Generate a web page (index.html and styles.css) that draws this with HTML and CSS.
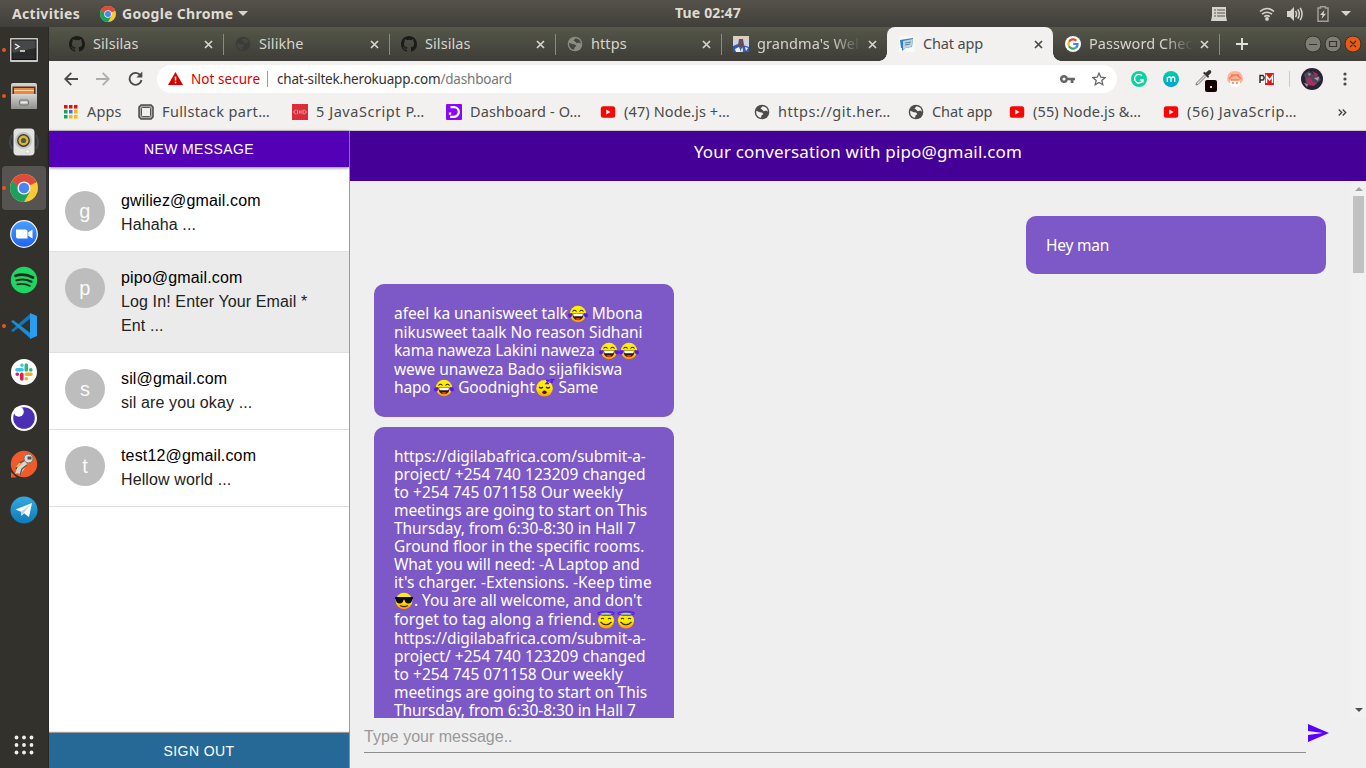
FILE: index.html
```html
<!DOCTYPE html>
<html lang="en">
<head>
<meta charset="utf-8">
<title>Chat app</title>
<link rel="stylesheet" href="styles.css">
</head>
<body>
<svg class="defs" width="0" height="0" aria-hidden="true">
  <defs>
    <linearGradient id="face" x1="0" y1="0" x2="0" y2="1"><stop offset="0" stop-color="#fff200"/><stop offset=".55" stop-color="#ffe800"/><stop offset="1" stop-color="#ff9800"/></linearGradient>
    <linearGradient id="metal" x1="0" y1="0" x2="0" y2="1"><stop offset="0" stop-color="#d4d4d2"/><stop offset="1" stop-color="#8f8f8c"/></linearGradient>
    <linearGradient id="zoomBlue" x1="0" y1="0" x2="0" y2="1"><stop offset="0" stop-color="#4aa0ff"/><stop offset="1" stop-color="#1f62f0"/></linearGradient>
    <linearGradient id="tgBlue" x1="0" y1="0" x2="0" y2="1"><stop offset="0" stop-color="#34aadf"/><stop offset="1" stop-color="#0e7bb8"/></linearGradient>
    <linearGradient id="teal" x1="0" y1="0" x2="0" y2="1"><stop offset="0" stop-color="#00d3a0"/><stop offset="1" stop-color="#009fdc"/></linearGradient>
  </defs>
  <symbol id="joy" viewBox="0 0 20 18"><circle cx="10" cy="9" r="8.2" fill="url(#face)"/><path d="M4.5 6.5q2-2.5 4 0M11.5 6.5q2-2.5 4 0" fill="none" stroke="#332a00" stroke-width="1.1"/><path d="M4.3 8.6h11.4q0 6.6-5.7 6.6T4.300 8.600z" fill="#2a1500"/><path d="M5 8.700h10l-.6 2.600H5.600z" fill="#fff"/><path d="M7 14q3-2 6 0-3 2-6 0z" fill="#f43a2a"/><path d="M.6 8.500 4.300 8l-.5 3.600q-1.600 1.800-3 .4t-.2-3.500zM19.400 8.500 15.700 8l.5 3.600q1.600 1.800 3 .4t.2-3.500z" fill="#5b16f5"/></symbol>
  <symbol id="sleep" viewBox="0 0 20 18"><circle cx="9.500" cy="9.300" r="8.300" fill="url(#face)"/><path d="M4 8q2 2 4 0M11 8q2 2 4 0" fill="none" stroke="#332a00" stroke-width="1.200"/><ellipse cx="9.500" cy="13.300" rx="2.200" ry="1.800" fill="#3a1700"/><path d="M11 1.500h3l-3 3h3M15.500.600h3l-3 2.600h2.500" fill="none" stroke="#5b16f5" stroke-width="1.300"/></symbol>
  <symbol id="cool" viewBox="0 0 20 18"><circle cx="10" cy="9" r="8.300" fill="url(#face)"/><path d="M1 5h18v1.500l-.800.500q-.200 4.500-4 4.500-3.200 0-3.700-3.800h-1Q9 11.500 5.800 11.500q-3.800 0-4-4.500L1 6.500z" fill="#0c0c0c"/><path d="M6 13.500q4 2.200 8 0" fill="none" stroke="#4a2a00" stroke-width="1.100"/></symbol>
  <symbol id="halo" viewBox="0 0 20 18"><circle cx="10" cy="9.600" r="8" fill="url(#face)"/><ellipse cx="10" cy="2.400" rx="8" ry="1.700" fill="none" stroke="#5b16f5" stroke-width="1.400"/><path d="M5 3h10" stroke="#66ddb0" stroke-width="1.100"/><path d="M5 8q1.500-1.500 3 0M12 8q1.500-1.500 3 0M4.500 11q5.500 5.500 11 0" fill="none" stroke="#332a00" stroke-width="1.100"/></symbol>
  <symbol id="chrome" viewBox="0 0 28 28"><circle cx="14" cy="14" r="14" fill="#fbc934"/><path d="M14 14 1.880 7A14 14 0 0 1 26.120 7z" fill="#dd4b3e"/><path d="M14 7h12.120L26.500 8.200 14 14z" fill="#dd4b3e"/><path d="M14 14 1.880 7A14 14 0 0 0 14 28l6-10.500z" fill="#1ba15f"/><path d="M2.800 5.700 8 14.500 14 7.600z" fill="#dd4b3e"/><circle cx="14" cy="14" r="6.600" fill="#f3f3f3"/><circle cx="14" cy="14" r="5.200" fill="#4a86f7"/></symbol>
  <symbol id="github" viewBox="0 0 16 16"><path fill="#1b1b1a" d="M8 0C3.580 0 0 3.580 0 8c0 3.540 2.290 6.530 5.470 7.590.4.070.55-.17.55-.38v-1.490c-2.010.37-2.530-.49-2.690-.94-.09-.23-.48-.94-.82-1.130-.28-.15-.68-.52-.01-.53.63-.01 1.080.58 1.230.82.72 1.210 1.870.87 2.330.66.070-.52.280-.87.510-1.070-1.780-.2-3.640-.89-3.640-3.950 0-.87.310-1.590.82-2.150-.08-.2-.36-1.020.08-2.120 0 0 .67-.21 2.200.82a7.500 7.500 0 0 1 4 0c1.530-1.040 2.200-.82 2.200-.82.44 1.100.16 1.920.08 2.120.51.56.82 1.270.82 2.150 0 3.070-1.870 3.750-3.650 3.950.29.25.54.73.54 1.480v2.200c0 .21.150.46.55.38A8 8 0 0 0 16 8c0-4.420-3.580-8-8-8z"/></symbol>
  <symbol id="globe" viewBox="0 0 16 16"><circle cx="8" cy="8" r="7.300" fill="currentColor"/><path fill="var(--land)" d="M2.300 6.800 5.800 8.200l2.200.3 1.400 1.500-1.900 1.400-.4 2.400Q2.600 13 2.200 8.800zM8.700 2.200 6.500 4.400l1.500 1.200 1.800 1.600 2.400-.6 1.600 1.200Q13.800 3 8.700 2.200z"/></symbol>
  <symbol id="close" viewBox="0 0 9 9"><path d="M1 1l7 7M8 1 1 8" stroke="currentColor" stroke-width="1.700"/></symbol>
  <symbol id="youtube" viewBox="0 0 16 16"><rect x=".8" y="2.200" width="14.400" height="11.600" rx="2.500" fill="#f80606"/><path d="M6.300 5.600v4.800L10.500 8z" fill="#fff"/></symbol>
</svg>

<header class="topbar">
  <span class="t-act">Activities</span>
  <svg width="16" height="16"><use href="#chrome"/></svg>
  <span class="t-name">Google Chrome</span>
  <i class="caret"></i>
  <span class="clock">Tue 02:47</span>
  <div class="status">
    <svg width="16" height="14" viewBox="0 0 16 14"><path d="M1 0h14v9l1 5H0l1-5z" fill="#d6d4cf"/><path d="M3 3h2M6 3h8M3 6h2M6 6h8M3 9h2M6 9h8" stroke="#55534c" stroke-width="1.200"/></svg>
    <svg class="wifi" width="16" height="14" viewBox="0 0 16 14"><path d="M1 4.500Q8-1.500 15 4.500M3 7.200q5-4 10 0M5.200 9.600q2.800-2 5.600 0" fill="none" stroke="#d6d4cf" stroke-width="1.600"/><circle cx="8" cy="11.900" r="1.900" fill="#d6d4cf"/></svg>
    <svg class="vol" width="16" height="14" viewBox="0 0 16 14"><path d="M0 4h3l4-4v14L3 10H0z" fill="#d6d4cf"/><path d="M8.500 4q2 3 0 6M10.800 2.300q3 4.700 0 9.400M13.200.8q3.800 6.200 0 12.400" fill="none" stroke="#d6d4cf" stroke-width="1.500"/></svg>
    <svg class="bat" width="12" height="16" viewBox="0 0 12 16"><path d="M3.500 2V.7h5V2H11v13.300H1V2z" fill="none" stroke="#a19f99" stroke-width="1.500"/><path d="M7.500 4 3 9h2.600L4.500 13 9 7.800H6.500z" fill="#d6d4cf"/></svg>
    <i class="caret"></i>
  </div>
</header>

<div class="desktop">
<nav class="dock">
  <div class="app run"><svg width="28" height="24" viewBox="0 0 28 24"><rect width="28" height="24" rx="1" fill="#c9c9c7"/><rect x="2" y="2" width="24" height="19.500" fill="#292b2a" stroke="#111"/><path d="M2.500 2.500h23V10l-23 5z" fill="#464847"/><path d="m5 6 4 2.500L5 11M10 13h5" fill="none" stroke="#eee" stroke-width="1.400"/></svg></div>
  <div class="app run"><svg width="28" height="28" viewBox="0 0 28 28"><rect x="1" y="1" width="26" height="26" rx="2" fill="url(#metal)"/><rect x="2.500" y="4.500" width="23" height="9" fill="#593016"/><path d="M4 6h20v2H4zM4 9h20v4H4z" fill="#ef8740"/><path d="M4 8h20v1H4z" fill="#ffd9a8"/><rect x="1" y="12" width="26" height="15" rx="1" fill="url(#metal)"/><rect x="9.500" y="18" width="9" height="5" rx="1.200" fill="#bbb" stroke="#6d6d6a"/><path d="M11 20.500h6" stroke="#eee" stroke-width="1.500"/></svg></div>
  <div class="app"><svg width="30" height="28" viewBox="0 0 30 28"><path d="M3 7q-4 7 0 14M27 7q4 7 0 14" fill="none" stroke="#3d474f" stroke-width="2"/><rect x="4.500" y=".5" width="21" height="27" rx="4" fill="#e2e2df"/><circle cx="14.500" cy="12.500" r="8.500" fill="#c2c3c1"/><circle cx="14.500" cy="12.500" r="6.400" fill="#3b3b38"/><circle cx="14.500" cy="12.500" r="5" fill="#d8b92a"/><circle cx="14.500" cy="12.500" r="2.600" fill="#55564c"/><circle cx="18.500" cy="23.500" r="1.800" fill="#fff" stroke="#bbb" stroke-width=".6"/></svg></div>
  <div class="app run active"><svg width="28" height="28"><use href="#chrome"/></svg></div>
  <div class="app"><svg width="28" height="28" viewBox="0 0 28 28"><circle cx="14" cy="14" r="13.300" fill="url(#zoomBlue)" stroke="#f4f7fb" stroke-width="1.200"/><path d="M6 9.500h9.500q2 0 2 2V18.500H8q-2 0-2-2zM18.300 12.300 22.500 9.500v9l-4.200-2.800z" fill="#fff"/></svg></div>
  <div class="app"><svg width="28" height="28" viewBox="0 0 28 28"><circle cx="14" cy="14" r="13.200" fill="#1ed760"/><path d="M5.500 9.800q9-2.800 17.500 1.700" fill="none" stroke="#1f2b22" stroke-width="2.700" stroke-linecap="round"/><path d="M6.500 14.300q8-2.200 15 1.500" fill="none" stroke="#1f2b22" stroke-width="2.200" stroke-linecap="round"/><path d="M7.300 18.400q6.700-1.600 12.500 1.500" fill="none" stroke="#1f2b22" stroke-width="1.800" stroke-linecap="round"/></svg></div>
  <div class="app run"><svg width="28" height="28" viewBox="0 0 28 28"><path d="m1 18.500 2 1.500L21 6V1z" fill="#1478be"/><path d="m1 9.500 2-1.500 18 13.500V27z" fill="#1c8cd8"/><path d="m20 1 7 3v20l-7 3z" fill="#2a9df0"/></svg></div>
  <div class="app"><svg width="28" height="28" viewBox="0 0 28 28"><circle cx="14" cy="14" r="13" fill="#fff"/><g stroke-width="3.600" stroke-linecap="round"><path d="M7 11.700h5M12 7.200v.1" stroke="#36c5f0"/><path d="M16.300 7v5M20.800 12v-.1" stroke="#2eb67d"/><path d="M16.300 16.300h4.700M16.300 20.800h.1" stroke="#ecb22e"/><path d="M11.800 16.300v4.700M7.200 16.300h.1" stroke="#e01e5a"/></g></svg></div>
  <div class="app"><svg width="28" height="28" viewBox="0 0 28 28"><circle cx="14" cy="14" r="13" fill="#fff"/><circle cx="14" cy="14" r="10.800" fill="#4a2fb5"/><circle cx="8.800" cy="7.800" r="5" fill="#fff"/></svg></div>
  <div class="app"><svg width="28" height="28" viewBox="0 0 28 28"><circle cx="14" cy="14" r="13.200" fill="#f15a29"/><path d="M1 22v5.500h5.500z" fill="#f15a29"/><path d="M16 9 7 18l-2 6 3-1 2 2 7-10z" fill="#d9d5d0"/><path d="m16 10-7 3-3 6M17 15l-5 4-2 6" fill="none" stroke="#65513f" stroke-width="1.300"/><circle cx="18.500" cy="8.500" r="4.500" fill="#dedbd7" stroke="#756f69"/><path d="M17.500 6.500h4v3h-4z" fill="#55504b"/><path d="m7 17 3-4" stroke="#ffb14b" stroke-width="2"/></svg></div>
  <div class="app"><svg width="28" height="28" viewBox="0 0 28 28"><circle cx="14" cy="14" r="13.500" fill="url(#tgBlue)"/><path d="M5.500 13.500 22 7l-3 14-5-3.700-2.500 2.500-.5-4z" fill="#fff"/><path d="m11 15.800 9-7-6.500 8.500-2 2.500z" fill="#b9d4e7"/></svg></div>
  <svg class="grid" width="20" height="20" viewBox="0 0 20 20" fill="#eee"><circle cx="2.500" cy="2.500" r="1.900"/><circle cx="10" cy="2.500" r="1.900"/><circle cx="17.500" cy="2.500" r="1.900"/><circle cx="2.500" cy="10" r="1.900"/><circle cx="10" cy="10" r="1.900"/><circle cx="17.500" cy="10" r="1.900"/><circle cx="2.500" cy="17.500" r="1.900"/><circle cx="10" cy="17.500" r="1.900"/><circle cx="17.500" cy="17.500" r="1.900"/></svg>
</nav>

<main class="window">
  <div class="tabs">
    <div class="tab"><svg class="fav"><use href="#github"/></svg><span class="title">Silsilas</span><svg class="x"><use href="#close"/></svg></div>
    <div class="tab"><svg class="fav dim"><use href="#globe"/></svg><span class="title">Silikhe</span><svg class="x"><use href="#close"/></svg></div>
    <div class="tab"><svg class="fav"><use href="#github"/></svg><span class="title">Silsilas</span><svg class="x"><use href="#close"/></svg></div>
    <div class="tab"><svg class="fav gray"><use href="#globe"/></svg><span class="title">https</span><svg class="x"><use href="#close"/></svg></div>
    <div class="tab before"><svg class="fav" viewBox="0 0 16 16"><rect width="16" height="16" fill="#cfd3df"/><path d="M0 0h16v4H0z" fill="#d9cfbc"/><path d="M0 10 5 8l3 4v4H0zM10 9l6 2v5h-6z" fill="#315cb5"/><path d="M6 3h4l1 6-2 4-4-4z" fill="#674b5f"/><path d="m2 13 4-2 2 5H3zM12 11l3 1-2 3z" fill="#eef3ff"/></svg><span class="title fade">grandma's Wel</span><svg class="x"><use href="#close"/></svg></div>
    <div class="tab current"><svg class="fav" viewBox="0 0 16 16"><rect width="16" height="16" fill="#f8f8f6"/><path d="m1 4 13-2-1 9-7 1-3 3v-3H2z" fill="#2f80c7"/><path d="m4 5 10-2-1.500 8L6 12l-2 1z" fill="#bcd3e2"/><path d="m6 7 6-1M6 9l5-1" stroke="#638299"/></svg><span class="title">Chat app</span><svg class="x"><use href="#close"/></svg></div>
    <div class="tab"><svg class="fav" viewBox="0 0 16 16"><circle cx="8" cy="8" r="8" fill="#fff"/><g fill="none" stroke-width="2.200"><path d="M4 5.700A4.600 4.600 0 0 1 11.300 4.700" stroke="#ea4335"/><path d="M4 10.300a4.600 4.600 0 0 1 0-4.600" stroke="#fbbc05"/><path d="M11 11.500a4.600 4.600 0 0 1-7-1.200" stroke="#34a853"/><path d="M8.200 8h4.400q0 2.300-1.600 3.500" stroke="#4285f4"/></g></svg><span class="title fade">Password Chec</span><svg class="x"><use href="#close"/></svg></div>
    <svg class="plus" width="12" height="12" viewBox="0 0 12 12"><path d="M6 0v12M0 6h12" stroke="#e4e2dc" stroke-width="1.900"/></svg>
    <svg class="winbtns" width="58" height="18" viewBox="0 0 58 18"><g fill="#7e7d76" stroke="#34332e"><circle cx="9" cy="9" r="8"/><circle cx="29" cy="9" r="8"/><circle cx="49" cy="9" r="8" fill="#ee5a12"/></g><path d="M5 9.500h8M25.500 6.500h7v5h-7zM46 6l6 6M52 6l-6 6" fill="none" stroke="#34332e" stroke-width="1.200"/></svg>
  </div>

  <div class="toolbar">
    <svg width="14" height="14" viewBox="0 0 14 14"><path d="M14 7H1.500M7.300.8 1.200 7l6.100 6.200" fill="none" stroke="#4a4a4a" stroke-width="1.800"/></svg>
    <svg class="fwd" width="14" height="14" viewBox="0 0 14 14"><path d="M0 7h12.500M6.700.8 12.800 7l-6.100 6.200" fill="none" stroke="#adadad" stroke-width="1.800"/></svg>
    <svg class="reload" width="15" height="15" viewBox="0 0 15 15"><path d="M12.600 4.500A6 6 0 1 0 13.500 9" fill="none" stroke="#4a4a4a" stroke-width="1.900"/><path d="M14.300.5v6h-6z" fill="#4a4a4a"/></svg>
    <div class="omni">
      <svg width="15" height="13" viewBox="0 0 15 13"><path d="M7.500 0 15 13H0z" fill="#d90000"/><path d="M7.500 4.500v4M7.500 9.700v1.600" stroke="#fff" stroke-width="1.500"/></svg>
      <span class="ns">Not secure</span>
      <i class="bar"></i>
      <span class="url">chat-siltek.herokuapp.com<span class="path">/dashboard</span></span>
      <svg class="key" width="15" height="8" viewBox="0 0 15 8"><path fill="#666" fill-rule="evenodd" d="M4 0a4 4 0 0 1 3.800 2.800H15v2.400h-1.500V8h-2.800V5.200H7.800A4 4 0 1 1 4 0zm0 2.500a1.500 1.500 0 1 0 0 3 1.500 1.500 0 0 0 0-3z"/></svg>
      <svg class="star" width="14" height="14" viewBox="0 0 14 14"><path d="m7 1.200 1.800 4 4.300.4-3.300 2.900 1 4.200L7 10.500l-3.800 2.200 1-4.200L.9 5.600l4.300-.4z" fill="none" stroke="#666" stroke-width="1.300"/></svg>
    </div>
    <div class="exts">
      <svg width="16" height="16" viewBox="0 0 16 16"><circle cx="8" cy="8" r="8" fill="#0fd0a0"/><path d="M11 4.700A4.300 4.300 0 1 0 12 9H9.200M12 9v2.500" fill="none" stroke="#fff" stroke-width="1.400"/></svg>
      <svg width="16" height="16" viewBox="0 0 16 16"><circle cx="8" cy="8" r="8" fill="url(#teal)"/><path d="M4.300 11V6M4.300 7q3-2 3.700 0v4M8 7q3.300-2 3.700 0v4" fill="none" stroke="#fff" stroke-width="1.300"/></svg>
      <svg class="drop" width="22" height="23" viewBox="0 0 22 23"><path d="m9.500 6-8 8-.5 2 2-.5 8-8" fill="#ddd" stroke="#777"/><path d="m8 4 5 5 1.200-1.200-1-1L16 4q1-3-2-3l-3.300 2.800-1.200-1z" fill="#333"/><rect x="10" y="11" width="12" height="12" rx="2" fill="#170000"/><rect x="15" y="17" width="2" height="2" fill="#ddd"/></svg>
      <svg width="16" height="16" viewBox="0 0 16 16"><path d="M0 9q0-9 8-9t8 9l-2 3H2z" fill="#ffb49c"/><path d="M2 8q6-8 12 0M4 4l8 0" fill="none" stroke="#ff7850" stroke-width="1.500"/><path d="M3 9h10v4l-2 3H5l-2-3z" fill="#fff"/><path d="M3.500 9h9M5 12h2M9 12h2" stroke="#ff7850" stroke-width="1.500"/></svg>
      <svg width="16" height="12" viewBox="0 0 16 12"><rect x="6" width="9" height="12" fill="#e61414"/><path d="M1 10V2.500h3q2.300 2.300 0 4.500H1" fill="none" stroke="#3a2a2a" stroke-width="1.500"/><path d="M7.500 10V3l3 4 3-4v7" fill="none" stroke="#fff" stroke-width="1.500"/></svg>
      <i class="bar"></i>
      <svg class="me" width="22" height="22" viewBox="0 0 22 22"><circle cx="11" cy="11" r="11" fill="#282431"/><path d="m3 6 5-3 4 3 6 2 2 4-5 4-5-3-5 2z" fill="#51455a"/><path d="m5 11 4-2 3 5 4 1-3 3-6-1zM11 3l6 3-2 3z" fill="#a53062"/><path d="m3 15 4 1-1 3zM13 10l5-1-1 4zM7 5l3 1-2 2z" fill="#ad9ca8"/></svg>
      <svg class="dots" width="4" height="14" viewBox="0 0 4 14" fill="#4a4a4a"><circle cx="2" cy="2" r="1.600"/><circle cx="2" cy="7" r="1.600"/><circle cx="2" cy="12" r="1.600"/></svg>
    </div>
  </div>

  <div class="bookmarks">
    <a class="bm b1"><svg width="14" height="14" viewBox="0 0 14 14"><path d="M0 0h3.500v3.500H0zM5 0h3.500v3.500H5zM10 0h3.500v3.500H10z" fill="#f00a0a"/><path d="M0 5h3.500v3.500H0zM0 10h3.500v3.500H0z" fill="#0aa858"/><path d="M5 5h3.500v3.500H5z" fill="#3f6cf5"/><path d="M10 5h3.500v3.500H10zM5 10h3.500v3.500H5zM10 10h3.500v3.500H10z" fill="#fbb90a"/></svg><span>Apps</span></a>
    <a class="bm b2"><svg width="16" height="16" viewBox="0 0 16 16"><path d="M3 1h10l2 2v10l-2 2H3l-2-2V3z" fill="#a8a8a6" stroke="#4a4a48" stroke-width="1.500"/><rect x="3.500" y="3.500" width="9" height="9" rx="1" fill="#efefed" stroke="#555"/></svg><span>Fullstack part…</span></a>
    <a class="bm b3"><svg width="16" height="16" viewBox="0 0 16 16"><rect width="16" height="16" fill="#d92d3a"/><path d="m4 5.500-2.500 2.500L4 10.500M12 5.500 14.500 8 12 10.500M5.500 6v4M7.500 6.500v3M9 6.500v3M11 6v4" fill="none" stroke="#f6a5a5"/></svg><span>5 JavaScript P…</span></a>
    <a class="bm b4"><svg width="16" height="16" viewBox="0 0 16 16"><rect width="16" height="16" rx="1" fill="#8a06f5"/><path d="M4.500 3.200h3.500a4.800 4.800 0 0 1 0 9.600H4.200M4 8.500v2.300" fill="none" stroke="#fff" stroke-width="2.300"/></svg><span>Dashboard - O…</span></a>
    <a class="bm b5"><svg width="16" height="16"><use href="#youtube"/></svg><span>(47) Node.js +…</span></a>
    <a class="bm b6"><svg class="dark" width="16" height="16"><use href="#globe"/></svg><span>https://git.her…</span></a>
    <a class="bm b7"><svg class="dark" width="16" height="16"><use href="#globe"/></svg><span>Chat app</span></a>
    <a class="bm b8"><svg width="16" height="16"><use href="#youtube"/></svg><span>(55) Node.js &amp;…</span></a>
    <a class="bm b9"><svg width="16" height="16"><use href="#youtube"/></svg><span>(56) JavaScrip…</span></a>
    <svg class="more" width="9" height="7" viewBox="0 0 9 7"><path d="M.7.500 3.700 3.500l-3 3M4.700.500l3 3-3 3" fill="none" stroke="#444" stroke-width="1.400"/></svg>
  </div>

  <div class="page">
    <aside class="side">
      <button class="new">New message</button>
      <ul class="contacts">
        <li><span class="av">g</span><p>gwiliez@gmail.com<br><small>Hahaha ...</small></p></li>
        <li class="sel"><span class="av">p</span><p>pipo@gmail.com<br><small>Log In! Enter Your Email * Ent ...</small></p></li>
        <li><span class="av">s</span><p>sil@gmail.com<br><small>sil are you okay ...</small></p></li>
        <li><span class="av">t</span><p>test12@gmail.com<br><small>Hellow world ...</small></p></li>
      </ul>
      <button class="out">Sign out</button>
    </aside>
    <section class="chat">
      <h1>Your conversation with pipo@gmail.com</h1>
      <div class="feed">
        <div class="msgs">
          <div class="msg mine"><p>Hey man</p></div>
          <div class="msg">
            <p class="em">afeel ka unanisweet talk<svg class="e"><use href="#joy"/></svg> Mbona</p>
            <p>nikusweet taalk No reason Sidhani</p>
            <p class="em tight">kama naweza Lakini naweza <svg class="e"><use href="#joy"/></svg><svg class="e"><use href="#joy"/></svg></p>
            <p>wewe unaweza Bado sijafikiswa</p>
            <p class="em tight">hapo <svg class="e"><use href="#joy"/></svg> Goodnight<svg class="e"><use href="#sleep"/></svg> Same</p>
          </div>
          <div class="msg">
            <p>https://digilabafrica.com/submit-a-</p>
            <p class="wide">project/ +254 740 123209 changed</p>
            <p class="wide">to +254 745 071158 Our weekly</p>
            <p>meetings are going to start on This</p>
            <p>Thursday, from 6:30-8:30 in Hall 7</p>
            <p>Ground floor in the specific rooms.</p>
            <p>What you will need: -A Laptop and</p>
            <p class="wide">it's charger. -Extensions. -Keep time</p>
            <p class="em"><svg class="e"><use href="#cool"/></svg>. You are all welcome, and don't</p>
            <p class="em wide">forget to tag along a friend.<svg class="e"><use href="#halo"/></svg><svg class="e"><use href="#halo"/></svg></p>
            <p>https://digilabafrica.com/submit-a-</p>
            <p class="wide">project/ +254 740 123209 changed</p>
            <p class="wide">to +254 745 071158 Our weekly</p>
            <p>meetings are going to start on This</p>
            <p>Thursday, from 6:30-8:30 in Hall 7</p>
          </div>
        </div>
        <div class="scroll"><i class="up"></i><i class="thumb"></i><i class="down"></i></div>
      </div>
      <div class="compose">
        <span class="field">Type your message..</span>
        <svg width="24" height="24" viewBox="0 0 24 24"><path d="M2.010 21 23 12 2.010 3 2 10l15 2-15 2z" fill="#5a00ff"/></svg>
      </div>
    </section>
  </div>
</main>
</div>
</body>
</html>
```
FILE: styles.css
```css
* { box-sizing: border-box; margin: 0; padding: 0; }
body { width: 1366px; height: 768px; overflow: hidden; background: #33312c; font-family: "Noto Sans", sans-serif; display: flex; flex-direction: column; }
svg { display: block; flex: none; }
i { display: block; flex: none; }
.defs { position: absolute; }
.topbar { position: relative; height: 27px; flex: none; display: flex; align-items: center; padding-left: 12px; background: linear-gradient(#55524b, #413f3a); color: #dfdbd2; font-size: 14px; font-weight: 700; letter-spacing: .3px; white-space: nowrap; }
.t-act { width: 88px; }
.t-name { margin-left: 6px; width: 111px; }
.caret { border: 5px solid transparent; border-top-color: #d6d4cf; border-bottom: 0; margin-left: 5px; }
.clock { position: absolute; left: 675px; letter-spacing: .17px; line-height: 25px; top: 0; }
.status { margin-left: auto; display: flex; align-items: center; padding-right: 15px; }
.wifi { margin-left: 32px; }
.vol { margin-left: 12px; }
.bat { margin-left: 14px; }
.status .caret { margin-left: 12px; }

.desktop { flex: 1; display: flex; min-height: 0; }
.dock { width: 49px; flex: none; display: flex; flex-direction: column; align-items: center; padding: 1px 2px 0 1px; gap: 2px; background: #33312c; border-right: 1px solid #2b2925; }
.app { position: relative; width: 44px; height: 44px; flex: none; display: flex; align-items: center; justify-content: center; border-radius: 4px; }
.app.active { background: #555450; }
.run::before { content: ""; position: absolute; left: 0; top: 20px; width: 4px; height: 4px; border-radius: 50%; background: #e95420; }
.grid { margin: auto 0 13px; }

.window { flex: 1; display: flex; flex-direction: column; min-width: 0; background: #f2f1f0; }
.tabs { height: 34px; flex: none; display: flex; align-items: center; padding: 0 4px 0 8px; background: linear-gradient(#555749, #3e3d38); color: #d7d5cb; font-size: 14.5px; letter-spacing: .08px; }
.tab { position: relative; width: 166px; height: 34px; flex: none; display: flex; align-items: center; padding: 0 11px 0 12px; }
.tab::after { content: ""; position: absolute; right: -1px; top: 7px; width: 1px; height: 21px; background: #8b8a82; }
.before::after, .current::after { display: none; }
.fav { width: 16px; height: 16px; --land: #47473f; }
.dim { color: #3b3c3a; }
.gray { color: #8c8c87; }
.dark { color: #4c4c4c; --land: #f2f1f0; }
.title { margin-left: 8px; width: 104px; padding-bottom: 2px; flex: none; overflow: hidden; white-space: nowrap; }
.fade { -webkit-mask-image: linear-gradient(90deg, #000 72%, transparent 100%); mask-image: linear-gradient(90deg, #000 72%, transparent 100%); }
.x { width: 9px; height: 9px; margin-left: 7px; }
.current { background: #f2f1f0; color: #4a4a4a; border-radius: 8px 8px 0 0; letter-spacing: -.15px; }
.current::before { content: ""; position: absolute; left: -8px; right: -8px; bottom: 0; height: 8px; background: radial-gradient(circle at 0 0, transparent 7.5px, #f2f1f0 8px) left / 8px 8px no-repeat, radial-gradient(circle at 100% 0, transparent 7.5px, #f2f1f0 8px) right / 8px 8px no-repeat; }
.plus { margin-left: 17px; }
.winbtns { margin-left: auto; }

.toolbar { height: 35px; flex: none; display: flex; align-items: center; padding: 0 19px 0 15px; }
.fwd { margin-left: 18px; }
.reload { margin-left: 18px; }
.omni { margin-left: 14px; width: 960px; height: 28px; border-radius: 14px; background: #fff; display: flex; align-items: center; padding: 0 11px; font-size: 13.5px; letter-spacing: -.2px; white-space: nowrap; }
.ns { color: #d90000; margin-left: 8px; width: 69px; letter-spacing: .05px; }
.omni .bar { width: 1px; height: 16px; background: #999; margin: 0 9px 0 7px; }
.url { color: #333; }
.path { color: #777; }
.key { margin-left: auto; }
.star { margin-left: 17px; }
.exts { flex: 1; display: flex; align-items: center; padding-left: 14px; }
.exts svg { margin-right: 16px; }
.exts .drop { margin: 4px 10px 0 0; }
.exts .bar { width: 1px; height: 16px; background: #ccc; margin: 0 11px 0 -2px; }
.exts .me { margin: 0; }
.exts .dots { margin: 0 0 0 auto; }

.bookmarks { height: 35px; flex: none; border-bottom: 1px solid #c8c8c6; display: flex; align-items: center; padding: 0 19px 2px 15px; color: #4a4a4a; font-size: 14.5px; letter-spacing: .12px; }
.bm { display: flex; align-items: center; gap: 8px; height: 30px; white-space: nowrap; flex: none; }
.bm span { padding-bottom: 2px; }
.b1 { width: 74px; }
.b1 svg { margin-right: 1px; }
.b2, .b3, .b4, .b5, .b6, .b8 { width: 154px; }
.b7 { width: 101px; letter-spacing: -.1px; }
.b9 { width: 140px; }
.b2 { letter-spacing: .37px; }
.b3, .b6, .b9 { letter-spacing: .55px; }
.more { margin-left: auto; }

.page { flex: 1; display: flex; min-height: 0; }
.side { width: 301px; flex: none; display: flex; flex-direction: column; background: #fff; border-right: 1px solid #9b9b9b; font-family: "Liberation Sans", Arial, sans-serif; }
button { border: 0; height: 36px; flex: none; color: #fff; font: 14px/36px "Liberation Sans", Arial, sans-serif; letter-spacing: .4px; text-transform: uppercase; }
.new { background: #5300b6; box-shadow: 0 1px 3px rgba(0,0,0,.5); }
.side .out { height: 35px; background: #266997; box-shadow: 0 -1px 1px rgba(0,0,0,.4); }
.contacts { list-style: none; flex: 1; padding-top: 8px; font-size: 16px; line-height: 24px; letter-spacing: .15px; }
.contacts li { display: flex; gap: 16px; padding: 14px 16px; border-bottom: 1px solid #e0e0e0; color: #000; }
.contacts small { font-size: 16px; letter-spacing: .12px; color: #222; }
.contacts p { width: 212px; }
.sel { background: #ebebeb; }
.av { width: 40px; height: 40px; flex: none; margin-top: 2px; border-radius: 50%; background: #bdbdbd; color: #fafafa; font-size: 20px; line-height: 41px; text-align: center; }

.chat { flex: 1; display: flex; flex-direction: column; min-width: 0; background: #efefef; }
h1 { height: 50px; flex: none; background: #450098; color: #fff; font-size: 17px; font-weight: 400; line-height: 41px; letter-spacing: .17px; text-align: center; white-space: nowrap; }
.feed { height: 537px; flex: none; display: flex; overflow: hidden; }
.msgs { flex: 1; display: flex; flex-direction: column; gap: 10px; padding: 35px 25px 0 24px; }
.msg { width: 300px; flex: none; padding: 20px; border-radius: 10px; background: #7c59c6; color: #fff; font-size: 15.5px; line-height: 18px; letter-spacing: -.06px; white-space: nowrap; }
.mine { align-self: flex-end; letter-spacing: -.2px; }
.msg p { height: 18px; }
.msg .em { height: 19px; line-height: 19px; }
.msg .tight { letter-spacing: -.17px; }
.msg .wide { letter-spacing: .02px; }
.e { display: inline-block; width: 20px; height: 18px; vertical-align: -1px; margin: -3px 0; }
.scroll { width: 15px; flex: none; background: #f1f1f1; display: flex; flex-direction: column; align-items: center; padding: 6px 0; }
.up { border: 4px solid transparent; border-top: 0; border-bottom-color: #a3a3a3; }
.thumb { width: 11px; height: 77px; margin-top: 5px; background: #c1c1c1; }
.down { border: 4px solid transparent; border-bottom: 0; border-top-color: #505050; margin-top: auto; }
.compose { flex: 1; display: flex; align-items: flex-start; padding: 0 0 0 14px; }
.field { width: 942px; height: 35px; border-bottom: 1px solid #8c8c8c; color: #999; font: 16px/37px "Liberation Sans", Arial, sans-serif; letter-spacing: 0; }
.compose svg { margin-top: 3px; }
```
